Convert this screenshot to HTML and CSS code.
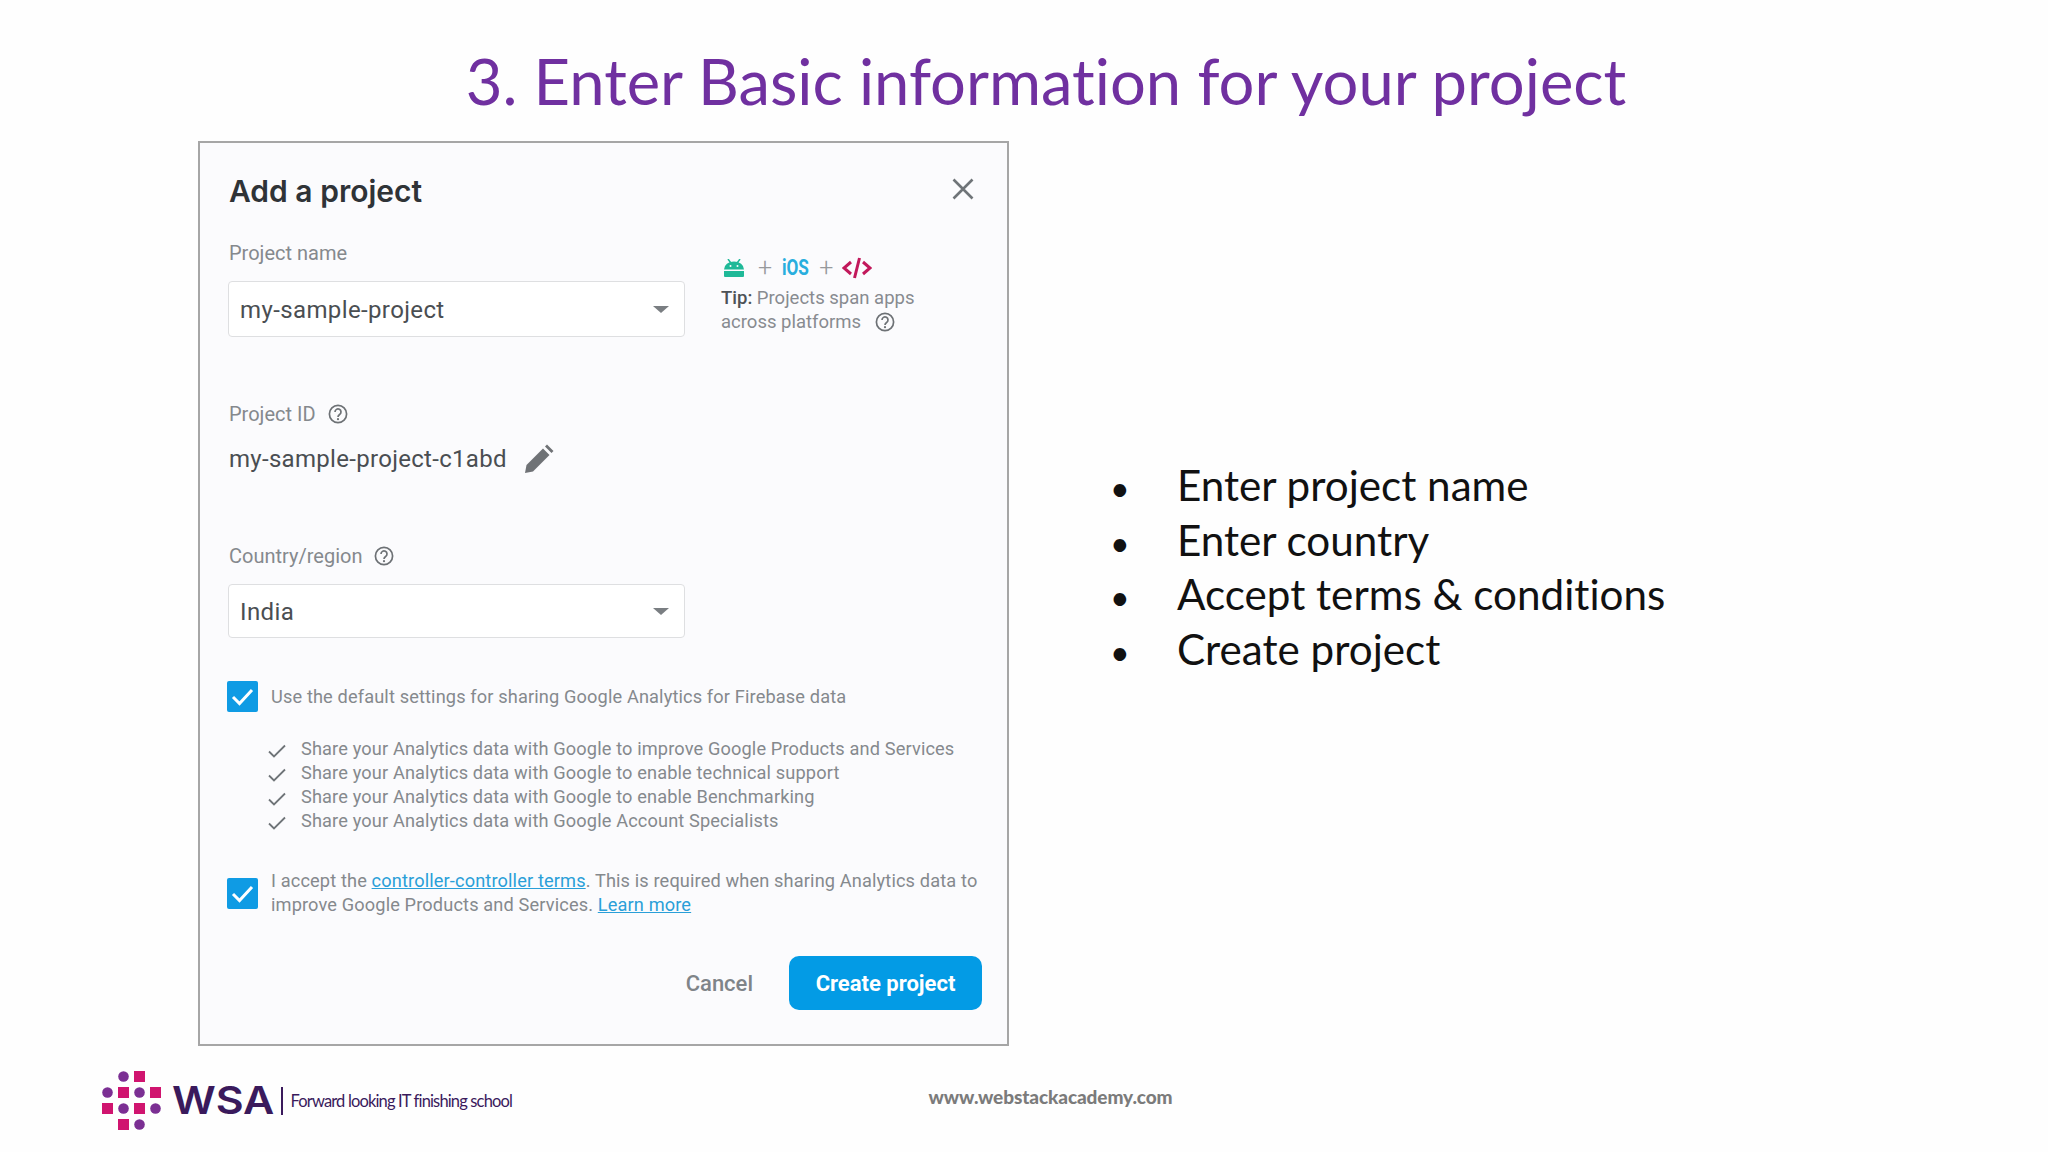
FILE: index.html
```html
<!DOCTYPE html>
<html lang="en">
<head>
<meta charset="utf-8">
<title>Enter Basic information</title>
<link rel="stylesheet" href="styles.css">
</head>
<body>
<div class="slide">
  <h1 class="slide-title">3. Enter Basic information for your project</h1>
  <main class="content">
    <section class="dialog">
      <header class="dialog-head">
        <h2 class="dialog-title">Add a project</h2>
        <svg class="close" viewBox="0 0 22 22"><path d="M1.500 1.500 20.500 20.500M20.500 1.500 1.500 20.500"/></svg>
      </header>
      <div class="top-grid">
        <div>
          <div class="label">Project name</div>
          <div class="select select-name"><span>my-sample-project</span><i class="caret"></i></div>
        </div>
        <div class="tip">
          <div class="tip-icons">
            <svg class="android" viewBox="0 0 20 18"><path d="M0 10.500a10 8 0 0 1 20 0zM0 12h20v5a1 1 0 0 1-1 1H1a1 1 0 0 1-1-1z"/><path class="ant" d="M4 0 6.500 3.500M16 0 13.500 3.500"/><circle class="eye" cx="6.500" cy="7" r="1"/><circle class="eye" cx="13.500" cy="7" r="1"/></svg>
            <span class="plus">+</span><span class="ios">iOS</span><span class="plus">+</span>
            <svg class="code" viewBox="0 0 30 22"><path d="M9 5 2 11l7 6M21 5l7 6-7 6M17.500 1l-5 20"/></svg>
          </div>
          <p class="tip-text"><b>Tip:</b> Projects span apps<br>across platforms <svg class="help help-tip" viewBox="0 0 20 20"><use href="#help"/></svg></p>
        </div>
      </div>
      <div class="label label-id">Project ID <svg class="help" viewBox="0 0 20 20"><use href="#help"/></svg></div>
      <div class="id-row">
        <span>my-sample-project-c1abd</span>
        <svg class="pencil" viewBox="0 0 30 30"><path d="M1 29l1.500-8L19 4.500l6.500 6.500L9 27.500zM21 2.500l2-2 6.500 6.500-2 2z"/></svg>
      </div>
      <div class="label label-country">Country/region <svg class="help" viewBox="0 0 20 20"><use href="#help"/></svg></div>
      <div class="select select-country"><span>India</span><i class="caret"></i></div>
      <div class="check-row check-default">
        <svg class="box" viewBox="0 0 31 31"><rect width="31" height="31" rx="2"/><path d="M6 16l6.500 6.500L25 9"/></svg>
        <span>Use the default settings for sharing Google Analytics for Firebase data</span>
      </div>
      <ul class="shares">
        <li><svg class="tick" viewBox="0 0 18 14"><path d="M1 7.500l5 5L17 1.500"/></svg>Share your Analytics data with Google to improve Google Products and Services</li>
        <li><svg class="tick" viewBox="0 0 18 14"><path d="M1 7.500l5 5L17 1.500"/></svg>Share your Analytics data with Google to enable technical support</li>
        <li><svg class="tick" viewBox="0 0 18 14"><path d="M1 7.500l5 5L17 1.500"/></svg>Share your Analytics data with Google to enable Benchmarking</li>
        <li><svg class="tick" viewBox="0 0 18 14"><path d="M1 7.500l5 5L17 1.500"/></svg>Share your Analytics data with Google Account Specialists</li>
      </ul>
      <div class="check-row check-accept">
        <svg class="box" viewBox="0 0 31 31"><rect width="31" height="31" rx="2"/><path d="M6 16l6.500 6.500L25 9"/></svg>
        <span>I accept the <a href="#">controller-controller terms</a>. This is required when sharing Analytics data to<br>improve Google Products and Services. <a href="#">Learn more</a></span>
      </div>
      <div class="actions">
        <span class="cancel">Cancel</span>
        <span class="create">Create project</span>
      </div>
    </section>
    <ul class="bullets">
      <li>Enter project name</li>
      <li>Enter country</li>
      <li>Accept terms &amp; conditions</li>
      <li>Create project</li>
    </ul>
  </main>
  <footer class="footer">
    <svg class="dots" viewBox="0 0 59 59">
      <g class="c"><circle cx="21.500" cy="5.500" r="5.300"/><circle cx="5.500" cy="21.500" r="5.300"/><circle cx="37.500" cy="21.500" r="5.300"/><circle cx="21.500" cy="37.500" r="5.300"/><circle cx="53.500" cy="37.500" r="5.300"/><circle cx="37.500" cy="53.500" r="5.300"/></g>
      <g class="s"><rect x="32" y="0" width="11" height="11"/><rect x="16" y="16" width="11" height="11"/><rect x="48" y="16" width="11" height="11"/><rect x="0" y="32" width="11" height="11"/><rect x="32" y="32" width="11" height="11"/><rect x="16" y="48" width="11" height="11"/></g>
    </svg>
    <span class="wsa">WSA</span>
    <span class="rule"></span>
    <span class="tagline">Forward looking IT finishing school</span>
    <span class="url">www.webstackacademy.com</span>
  </footer>
</div>
<svg class="defs" aria-hidden="true"><defs><g id="help"><circle cx="10" cy="10" r="8.600" fill="none" stroke="currentColor" stroke-width="1.700"/><path d="M7 8a3 3 0 1 1 4.600 2.500C10.600 11.200 10 11.800 10 13" fill="none" stroke="currentColor" stroke-width="1.700"/><circle cx="10" cy="15.200" r="1.100" fill="currentColor"/></g></defs></svg>
</body>
</html>
```
FILE: styles.css
```css
* { box-sizing: border-box; }
html, body { margin: 0; padding: 0; background: #fff; }
.defs { display: none; }
.slide { width: 2048px; height: 1152px; overflow: hidden; background: #fefefe; display: flex; flex-direction: column; }
.slide-title { margin: 41px 0 20px; padding-left: 44px; height: 80px; text-align: center; font: 400 63.300px/80px Lato, sans-serif; font-variant-ligatures: none; color: #7030a0; }
.content { display: flex; align-items: flex-start; padding-left: 198px; }

.dialog { width: 811px; height: 905px; flex: none; border: 2px solid #a6a6a6; background: #fbfbfd; padding: 27px 25px 0 29px; font-family: Roboto, sans-serif; color: #7d8186; }
.dialog-head { display: flex; justify-content: space-between; align-items: flex-start; height: 40px; }
.dialog-title { margin: 0; padding-top: 1px; font: 600 30px/40px Inter, sans-serif; color: #2f3337; }
.close { width: 22px; height: 22px; margin: 8px 8px 0 0; fill: none; stroke: #6f7478; stroke-width: 2.600; }

.top-grid { display: grid; grid-template-columns: 456px 1fr; column-gap: 36px; margin-top: 31px; }
.label { font-size: 20px; line-height: 24px; display: flex; align-items: center; gap: 12px; color: #85898d; }
.select { display: flex; justify-content: space-between; align-items: center; width: 457px; margin-left: -1px; padding: 0 15px 0 11px; background: #fff; border: 1px solid #dedfe1; border-radius: 4px; font-size: 24px; letter-spacing: .38px; color: #4a4e52; }
.select span { padding-top: 1px; }
.select-name { height: 56px; margin-top: 16px; }
.select-country { height: 54px; margin-top: 16px; }
.caret { width: 0; height: 0; border-left: 8px solid transparent; border-right: 8px solid transparent; border-top: 7px solid #7a7e82; }

.tip { padding-top: 15px; }
.tip-icons { display: flex; align-items: center; height: 24px; margin-left: 3px; gap: 10px; }
.android { width: 20px; height: 18px; margin-right: 4px; fill: #1fb998; }
.android .ant { fill: none; stroke: #1fb998; stroke-width: 1.500; }
.android .eye { fill: #fbfbfd; }
.plus { font-size: 25px; font-weight: 300; line-height: 24px; color: #97999c; }
.ios { width: 27px; font: 700 22px/24px Roboto, sans-serif; color: #29aede; transform: scaleX(.78); transform-origin: left center; }
.code { width: 30px; height: 22px; margin-left: -1px; fill: none; stroke: #c2185b; stroke-width: 3; }
.tip-text { margin: 6px 0 0; font-size: 18.500px; line-height: 24px; color: #888b90; }
.tip-text b { font-weight: 500; color: #4e5256; }
.help { width: 20px; height: 20px; flex: none; color: #6d7175; }
.help-tip { margin-left: 9px; vertical-align: -4px; }

.label-id { margin-top: 65px; }
.id-row { display: flex; align-items: center; gap: 17px; height: 32px; margin-top: 17px; font-size: 24px; letter-spacing: .3px; color: #4a4e52; }
.pencil { width: 30px; height: 30px; fill: #6f7276; }
.label-country { margin-top: 69px; }

.check-row { display: flex; align-items: center; gap: 13px; margin-left: -2px; font-size: 18.200px; letter-spacing: .135px; line-height: 24px; color: #85898d; }
.box { width: 31px; height: 31px; flex: none; }
.box rect { fill: #0f9be4; }
.box path { fill: none; stroke: #fff; stroke-width: 3; }
.check-default { margin-top: 43px; }
.check-accept { margin-top: 36px; }
.check-accept a { color: #2a9fd8; text-decoration: underline; }

.shares { list-style: none; margin: 25px 0 0 39px; padding: 0; font-size: 18.200px; letter-spacing: .135px; line-height: 24px; color: #85898d; }
.shares li { display: flex; align-items: center; gap: 15px; }
.tick { width: 18px; height: 14px; flex: none; fill: none; stroke: #6f7478; stroke-width: 1.800; margin-top: 3px; }

.actions { display: flex; justify-content: flex-end; align-items: center; gap: 36px; margin-top: 39px; }
.cancel { font-size: 22px; font-weight: 500; color: #7f8489; }
.create { display: flex; align-items: center; justify-content: center; width: 193px; height: 54px; border-radius: 10px; background: #039be5; color: #fff; font-size: 22px; font-weight: 700; }

.bullets { list-style: none; margin: 317px 0 0 101px; padding: 0; font: 400 42.200px/54.700px Lato, sans-serif; font-variant-ligatures: none; color: #111; }
.bullets li { display: flex; align-items: baseline; height: 54.700px; }
.bullets li::before { content: "•"; width: 67px; flex: none; font-size: 34px; line-height: 1; }

.footer { display: flex; align-items: center; margin-top: 25px; padding-left: 102px; height: 59px; }
.dots { width: 59px; height: 59px; flex: none; }
.dots .c { fill: #7b2f93; }
.dots .s { fill: #d0146f; }
.wsa { margin-left: 11px; width: 104px; font: 600 38px/43px Inter, sans-serif; color: #3a1a5c; transform: scaleX(1.130); transform-origin: left center; }
.rule { width: 1.500px; height: 28px; margin-left: 5px; background: #3a1a5c; }
.tagline { margin-left: 8px; width: 222px; white-space: nowrap; font: 400 16.500px/20px Lato, sans-serif; letter-spacing: -.85px; color: #3a1a5c; }
.url { margin: 0 0 8px 416px; font: 900 19px/24px Lato, sans-serif; letter-spacing: -.1px; color: #7b7b7b; white-space: nowrap; }
```
